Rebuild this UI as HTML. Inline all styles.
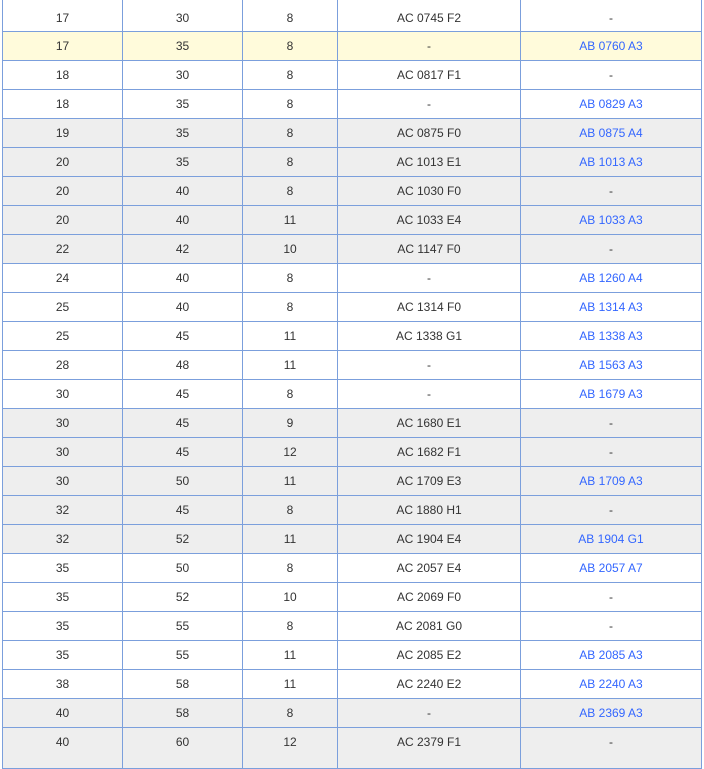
<!DOCTYPE html>
<html><head><meta charset="utf-8"><style>
body{margin:0;background:#fff;width:704px;height:756px;overflow:hidden;font-family:"Liberation Sans",Arial,sans-serif;font-size:12px;color:#333}
.r{position:absolute;left:2px;width:700px;height:28px;border-bottom:1px solid #7b9fdc}
.c{position:absolute;top:0;height:100%;border-left:1px solid #7b9fdc;display:flex;align-items:center;justify-content:center;box-sizing:border-box}
.g{background:#eeeeee}.y{background:#fffbdb}
a{color:#3366ff;text-decoration:none}
</style></head><body>
<div id="t"></div>
<script>
const rows=[
["17","30","8","AC 0745 F2","-",""],
["17","35","8","-","AB 0760 A3","y"],
["18","30","8","AC 0817 F1","-",""],
["18","35","8","-","AB 0829 A3",""],
["19","35","8","AC 0875 F0","AB 0875 A4","g"],
["20","35","8","AC 1013 E1","AB 1013 A3","g"],
["20","40","8","AC 1030 F0","-","g"],
["20","40","11","AC 1033 E4","AB 1033 A3","g"],
["22","42","10","AC 1147 F0","-","g"],
["24","40","8","-","AB 1260 A4",""],
["25","40","8","AC 1314 F0","AB 1314 A3",""],
["25","45","11","AC 1338 G1","AB 1338 A3",""],
["28","48","11","-","AB 1563 A3",""],
["30","45","8","-","AB 1679 A3",""],
["30","45","9","AC 1680 E1","-","g"],
["30","45","12","AC 1682 F1","-","g"],
["30","50","11","AC 1709 E3","AB 1709 A3","g"],
["32","45","8","AC 1880 H1","-","g"],
["32","52","11","AC 1904 E4","AB 1904 G1","g"],
["35","50","8","AC 2057 E4","AB 2057 A7",""],
["35","52","10","AC 2069 F0","-",""],
["35","55","8","AC 2081 G0","-",""],
["35","55","11","AC 2085 E2","AB 2085 A3",""],
["38","58","11","AC 2240 E2","AB 2240 A3",""],
["40","58","8","-","AB 2369 A3","g"],
["40","60","12","AC 2379 F1","-","g"]];
const xs=[0,120,240,335,518,699];
let h="";
rows.forEach((r,i)=>{
 let top=i==0?0:32+29*(i-1), ht=i==0?31:28, pt=i==0?4:0;
 if(i==rows.length-1){ht=40;pt=-12;}
 h+=`<div class="r ${r[5]}" style="top:${top}px;height:${ht}px">`;
 for(let j=0;j<5;j++){
  let w=(xs[j+1]||701)-xs[j];
  let v=r[j]; if(j==4&&v!="-")v=`<a>${v}</a>`;
  let pad=pt>0?`padding-top:${pt}px;`:(pt<0?`padding-bottom:${-pt}px;`:"");
  h+=`<div class="c" style="left:${xs[j]}px;width:${w}px;${pad}">${v}</div>`;
 }
 h+=`<div class="c" style="left:699px;width:0"></div></div>`;
});
document.getElementById("t").innerHTML=h;
</script>
</body></html>
